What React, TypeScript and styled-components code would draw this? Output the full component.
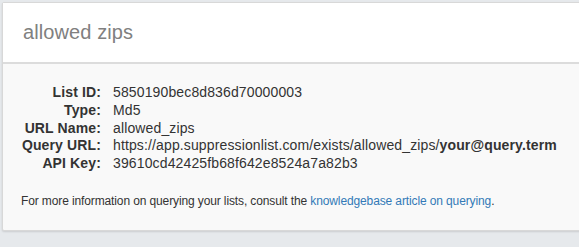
import React from "react";
import styled, { createGlobalStyle } from "styled-components";

const Global = createGlobalStyle`
  html, body { margin: 0; padding: 0; background: #e6e9ec; }
  body { font-family: "Liberation Sans", Arial, sans-serif; color: #333; }
`;

const Page = styled.div`
  padding: 2px 0 0 2px;
  height: 247px;
  box-sizing: border-box;
  overflow: hidden;
`;

const Panel = styled.div`
  width: 600px;
  background: #f9f9f9;
  border: 1px solid #d8d8d8;
  border-radius: 2px;
  box-shadow: 0 1px 2px rgba(0, 0, 0, 0.12);
`;

const Header = styled.div`
  height: 59px;
  display: flex;
  align-items: center;
  padding-left: 20px;
  background: #fff;
  border-bottom: 2px solid #dcdcdc;
`;

const Title = styled.h3`
  margin: 0;
  font-size: 20px;
  font-weight: 400;
  color: #808080;
  letter-spacing: 0.1px;
`;

const Body = styled.div`
  padding: 20px 18px 20px 18px;
`;

const Details = styled.dl`
  display: grid;
  grid-template-columns: 80px auto;
  column-gap: 12px;
  margin: 0;
  font-size: 14px;
  line-height: 17.8px;
  letter-spacing: 0.13px;
`;

const Label = styled.dt`
  font-weight: 700;
  text-align: right;
  white-space: nowrap;
`;

const Value = styled.dd`
  margin: 0;
  white-space: nowrap;
`;

const Note = styled.p`
  margin: 19px 0 0 0;
  font-size: 12px;
  line-height: 18px;
  letter-spacing: -0.12px;
`;

const Link = styled.a`
  color: #337ab7;
  text-decoration: none;
`;

const rows: [string, React.ReactNode][] = [
  ["List ID:", "5850190bec8d836d70000003"],
  ["Type:", "Md5"],
  ["URL Name:", "allowed_zips"],
  [
    "Query URL:",
    <>
      https://app.suppressionlist.com/exists/allowed_zips/<b>your@query.term</b>
    </>,
  ],
  ["API Key:", "39610cd42425fb68f642e8524a7a82b3"],
];

export default function App() {
  return (
    <>
      <Global />
      <Page>
        <Panel>
          <Header>
            <Title>allowed zips</Title>
          </Header>
          <Body>
            <Details>
              {rows.map(([k, v]) => (
                <React.Fragment key={k}>
                  <Label>{k}</Label>
                  <Value>{v}</Value>
                </React.Fragment>
              ))}
            </Details>
            <Note>
              For more information on querying your lists, consult the{" "}
              <Link href="#">knowledgebase article on querying</Link>.
            </Note>
          </Body>
        </Panel>
      </Page>
    </>
  );
}
